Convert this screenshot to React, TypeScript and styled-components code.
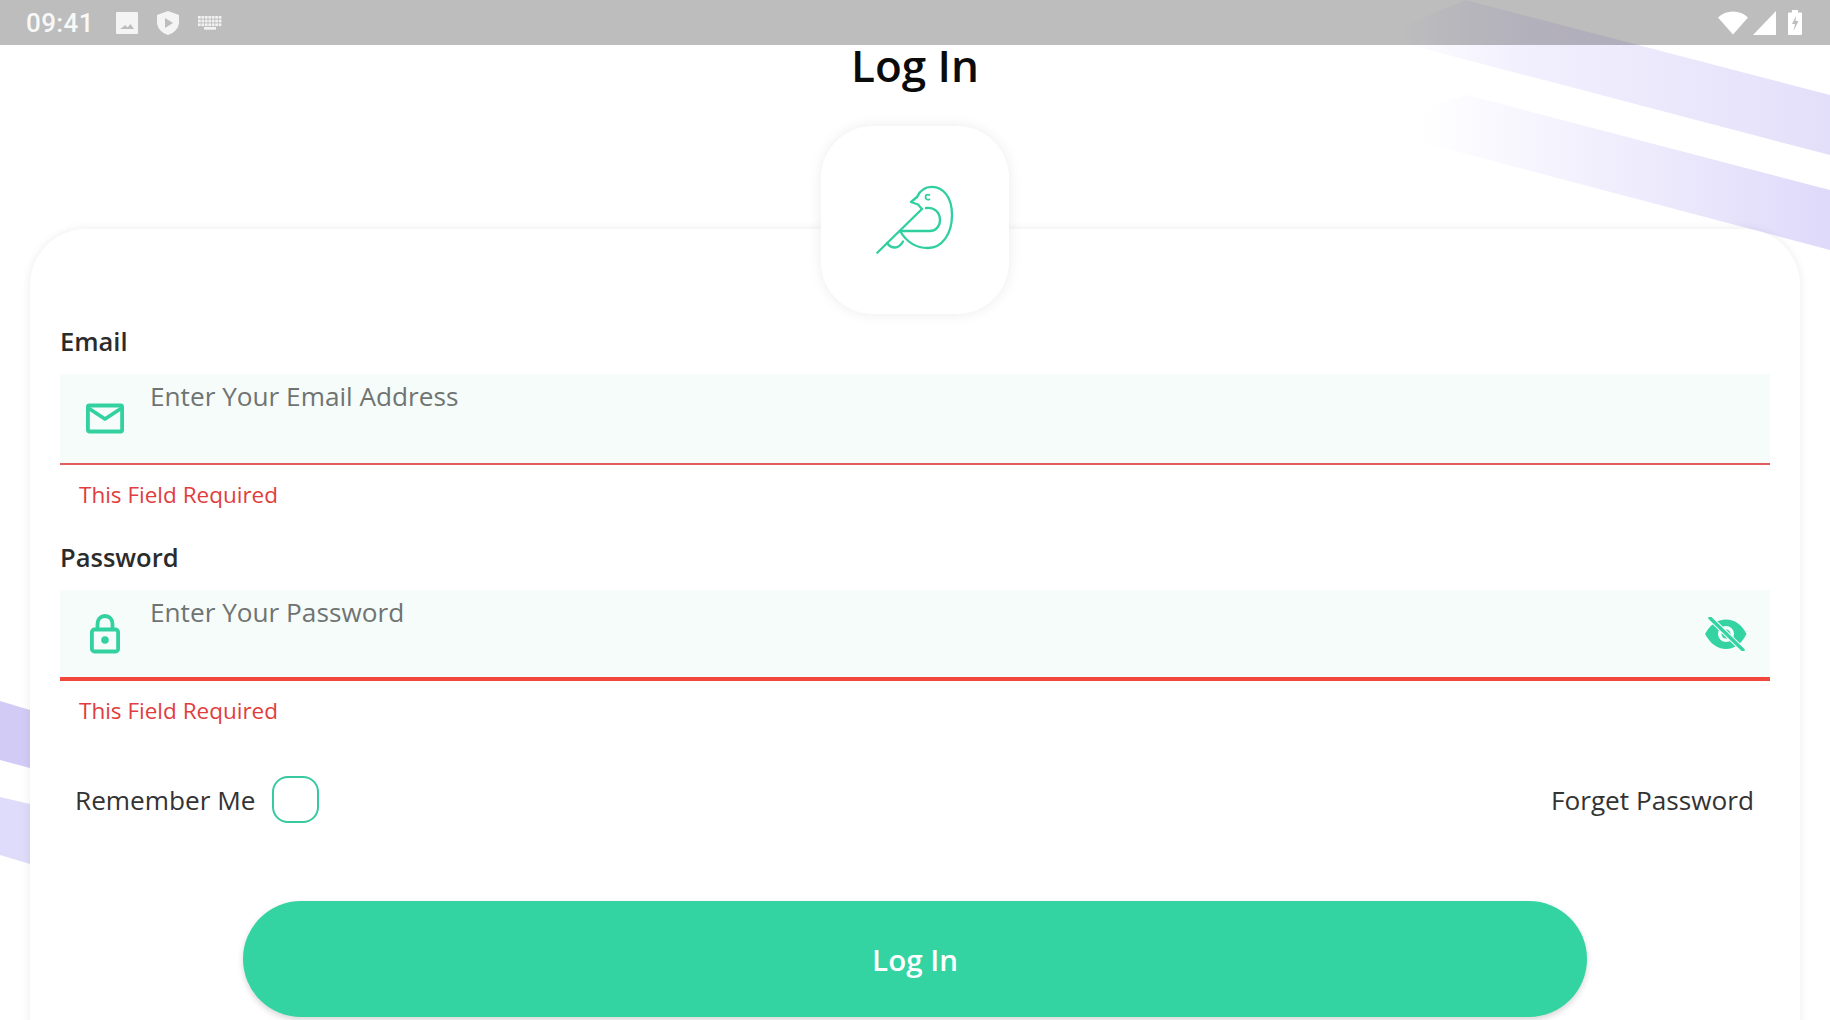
import React from "react";
import styled, { createGlobalStyle } from "styled-components";

const GlobalStyle = createGlobalStyle`
    html, body {
        margin: 0;
        padding: 0;
        background: #ffffff;
    }
    * {
        box-sizing: border-box;
    }
`;

const Screen = styled.div`
    position: relative;
    width: 1830px;
    height: 1020px;
    overflow: hidden;
    background: #ffffff;
    font-family: "Open Sans", "Liberation Sans", sans-serif;
`;

const Backdrop = styled.svg`
    position: absolute;
    left: 0;
    top: 0;
`;

const StatusBar = styled.div`
    position: relative;
    display: flex;
    align-items: center;
    justify-content: space-between;
    height: 45px;
    padding: 0 28px 0 26px;
    background: rgba(0, 0, 0, 0.26);
`;

const StatusGroup = styled.div`
    display: flex;
    align-items: center;
`;

const Clock = styled.span`
    width: 90px;
    font-family: Roboto, "Liberation Sans", sans-serif;
    font-size: 26px;
    font-weight: 500;
    letter-spacing: 0.4px;
    color: #f8f8f8;
`;

const Content = styled.div`
    position: relative;
    display: flex;
    flex-direction: column;
    align-items: center;
`;

const Title = styled.h1`
    margin: -9px 0 0;
    height: 90px;
    line-height: 58px;
    font-size: 44px;
    font-weight: 600;
    color: #0b0b0b;
`;

const LogoTile = styled.div`
    position: relative;
    z-index: 1;
    display: flex;
    align-items: center;
    justify-content: center;
    width: 188px;
    height: 188px;
    margin-bottom: -85px;
    border-radius: 52px;
    background: #ffffff;
    box-shadow: 0 0 14px rgba(0, 0, 0, 0.08);
`;

const Card = styled.div`
    align-self: stretch;
    display: flex;
    flex-direction: column;
    height: 900px;
    margin: 0 30px;
    padding: 95px 30px 0;
    border-radius: 56px 56px 0 0;
    background: #ffffff;
    box-shadow: 0 0 10px rgba(0, 0, 0, 0.08);
`;

const FieldLabel = styled.label`
    display: block;
    height: 36px;
    line-height: 34px;
    font-size: 25.500px;
    font-weight: 600;
    color: #2b2b2b;
`;

const InputBox = styled.div<{ $thick?: boolean }>`
    display: flex;
    align-items: center;
    height: 91px;
    margin-top: 14px;
    padding: 0 23px 0 26px;
    background: #f6fcfa;
    border-bottom: ${(p) => (p.$thick ? "4px solid #f2473c" : "2px solid #e25d5d")};
`;

const FieldIcon = styled.svg`
    flex: none;
    width: 38px;
    height: 40px;
`;

const Placeholder = styled.span`
    flex: 1;
    align-self: flex-start;
    margin: 4px 0 0 26px;
    line-height: 37px;
    font-size: 26.200px;
    color: #6f7472;
`;

const ErrorText = styled.div`
    height: 36px;
    margin: 12px 0 27px 19px;
    line-height: 36px;
    font-size: 22.500px;
    color: #e03e3e;
`;

const OptionsRow = styled.div`
    display: flex;
    align-items: center;
    justify-content: space-between;
    margin-top: 20px;
    padding: 0 16px 0 15px;
`;

const Remember = styled.div`
    display: flex;
    align-items: center;
    gap: 16px;
`;

const OptionText = styled.span`
    font-size: 26.200px;
    color: #333333;
`;

const CheckBox = styled.span`
    display: block;
    width: 47px;
    height: 47px;
    border: 2px solid #38c9a0;
    border-radius: 16px;
`;

const SubmitButton = styled.button`
    align-self: center;
    width: 1344px;
    height: 116px;
    margin-top: 78px;
    flex: none;
    border: 0;
    border-radius: 58px;
    background: #33d4a2;
    box-shadow: 0 3px 6px rgba(0, 0, 0, 0.16);
    font-family: inherit;
    font-size: 29.500px;
    font-weight: 600;
    color: #ffffff;
`;

const Stripes = () => (
    <Backdrop width="1830" height="1020" viewBox="0 0 1830 1020">
        <defs>
            <linearGradient id="stripeTop" x1="1400" y1="0" x2="1830" y2="0" gradientUnits="userSpaceOnUse">
                <stop offset="0" stopColor="#eae6fc" stopOpacity="0" />
                <stop offset="0.3" stopColor="#eeebfd" stopOpacity="0.8" />
                <stop offset="1" stopColor="#e3dffa" />
            </linearGradient>
            <linearGradient id="stripeLow" x1="1420" y1="0" x2="1830" y2="0" gradientUnits="userSpaceOnUse">
                <stop offset="0" stopColor="#e0dbfa" stopOpacity="0" />
                <stop offset="0.25" stopColor="#e0dbfa" stopOpacity="0.25" />
                <stop offset="1" stopColor="#dfd9fa" />
            </linearGradient>
        </defs>
        <polygon points="1465,0 1830,95 1830,155 1410,45 1400,28" fill="url(#stripeTop)" />
        <polygon points="1467,95 1830,190 1830,250 1356,125" fill="url(#stripeLow)" />
        <polygon points="0,701 30,710 30,768 0,760" fill="#d1cbf6" />
        <polygon points="0,797 30,804 30,864 0,855" fill="#dfdbfa" />
    </Backdrop>
);

const PictureIcon = () => (
    <svg width="22" height="22" viewBox="0 0 22 22" style={{ marginRight: 19 }}>
        <path
            fill="#f4f4f4"
            fillRule="evenodd"
            d="M1 0h20a1 1 0 0 1 1 1v20a1 1 0 0 1-1 1H1a1 1 0 0 1-1-1V1a1 1 0 0 1 1-1zM4 17h14l-3.5-5-3 3.4-2-2.4z"
        />
    </svg>
);

const ShieldIcon = () => (
    <svg width="22" height="24" viewBox="0 0 22 24" style={{ marginRight: 19 }}>
        <path
            fill="#f4f4f4"
            fillRule="evenodd"
            d="M11 0l11 4v7c0 6-4.500 11-11 13C4.500 22 0 17 0 11V4zM8 7v10l8-5z"
        />
    </svg>
);

const KeyboardIcon = () => (
    <svg width="24" height="14" viewBox="0 0 24 14" fill="#f2f2f2">
        {[0, 3.700, 7.400].map((y) =>
            [0, 1, 2, 3, 4, 5, 6].map((i) => (
                <rect key={`${y}-${i}`} x={i * 3.450} y={y} width="2.700" height="2.700" />
            ))
        )}
        <rect x="6" y="11" width="12" height="2.700" />
    </svg>
);

const WifiIcon = () => (
    <svg width="30" height="24" viewBox="0 0 30 24" style={{ marginRight: 5 }}>
        <path fill="#ffffff" d="M15 23.500L0 6.500C4 2.500 9 .500 15 .500s11 2 15 6z" />
    </svg>
);

const SignalIcon = () => (
    <svg width="24" height="24" viewBox="0 0 24 24" style={{ marginRight: 11 }}>
        <path fill="#ffffff" d="M23 0v24H0z" />
    </svg>
);

const BatteryIcon = () => (
    <svg width="14" height="25" viewBox="0 0 14 25">
        <path
            fill="#ffffff"
            fillRule="evenodd"
            d="M4 0h6v2.500h3a1 1 0 0 1 1 1V24a1 1 0 0 1-1 1H1a1 1 0 0 1-1-1V3.500a1 1 0 0 1 1-1h3zM8 6L4 14h3l-1.500 7L10.500 11H7.500z"
        />
    </svg>
);

const BirdLogo = () => (
    <svg width="90" height="80" viewBox="0 0 90 80" fill="none" stroke="#2fcf9f" strokeWidth="2.300" strokeLinecap="round" strokeLinejoin="round">
        <path d="M7.300 72.700L51.700 29.300" />
        <path d="M47 17C50 10 55 6.800 62 6.800C73 6.800 82 17 82 35C82 54 72 68 58 68C45 68 36 61 30 51" />
        <path d="M47 17L41 22L48 24.500L52 29" />
        <path d="M56 28C64 27 70 32 70 40C70 47 65 51 60 51H30" />
        <path d="M17 63C19 66 22 67.500 25 67.500C28 67.500 31 65 33 61.500" />
        <path d="M59.500 15C57 14 55.500 15 55.500 17C55.500 19 57 20 59.500 19.300" strokeWidth="1.800" />
    </svg>
);

const MailIcon = () => (
    <FieldIcon viewBox="0 0 38 40" fill="none" stroke="#33d0a0" strokeWidth="3.800" strokeLinejoin="round" strokeLinecap="round">
        <rect x="1.900" y="6.500" width="34.200" height="26" rx="1.500" />
        <path d="M3 9.500L19 20L35 9.500" />
    </FieldIcon>
);

const LockIcon = () => (
    <FieldIcon viewBox="0 0 38 40" fill="none" stroke="#33d0a0" strokeWidth="3.800" strokeLinejoin="round">
        <rect x="5.900" y="15.500" width="26.200" height="22" rx="2.500" />
        <path d="M11.500 15.500V10C11.500 5.500 14.500 2 19 2C23.500 2 26.500 5.500 26.500 10V15.500" />
        <circle cx="19" cy="26" r="3.800" fill="#33d0a0" stroke="none" />
    </FieldIcon>
);

const EyeOffIcon = () => (
    <svg width="42" height="34" viewBox="0 0 42 34" style={{ flex: "none" }}>
        <path
            fill="#33d4a2"
            fillRule="evenodd"
            d="M0 17C5 7.500 12.500 2.500 21 2.500S37 7.500 41.500 17C37 26.500 29.500 32 21 32S5 26.500 0 17zM21 9a8 8 0 1 0 0 16a8 8 0 1 0 0-16z"
        />
        <circle cx="21" cy="17" r="4.500" fill="#33d4a2" />
        <path d="M5 1L38 33" stroke="#f6fcfa" strokeWidth="5.500" />
        <path d="M5 1L38 33" stroke="#33d4a2" strokeWidth="3.400" strokeLinecap="round" />
    </svg>
);

const App = () => {
    return (
        <Screen>
            <GlobalStyle />
            <Stripes />
            <StatusBar>
                <StatusGroup>
                    <Clock>09:41</Clock>
                    <PictureIcon />
                    <ShieldIcon />
                    <KeyboardIcon />
                </StatusGroup>
                <StatusGroup>
                    <WifiIcon />
                    <SignalIcon />
                    <BatteryIcon />
                </StatusGroup>
            </StatusBar>
            <Content>
                <Title>Log In</Title>
                <LogoTile>
                    <BirdLogo />
                </LogoTile>
                <Card>
                    <FieldLabel>Email</FieldLabel>
                    <InputBox>
                        <MailIcon />
                        <Placeholder>Enter Your Email Address</Placeholder>
                    </InputBox>
                    <ErrorText>This Field Required</ErrorText>
                    <FieldLabel>Password</FieldLabel>
                    <InputBox $thick>
                        <LockIcon />
                        <Placeholder>Enter Your Password</Placeholder>
                        <EyeOffIcon />
                    </InputBox>
                    <ErrorText>This Field Required</ErrorText>
                    <OptionsRow>
                        <Remember>
                            <OptionText>Remember Me</OptionText>
                            <CheckBox />
                        </Remember>
                        <OptionText>Forget Password</OptionText>
                    </OptionsRow>
                    <SubmitButton>Log In</SubmitButton>
                </Card>
            </Content>
        </Screen>
    );
};

export default App;
